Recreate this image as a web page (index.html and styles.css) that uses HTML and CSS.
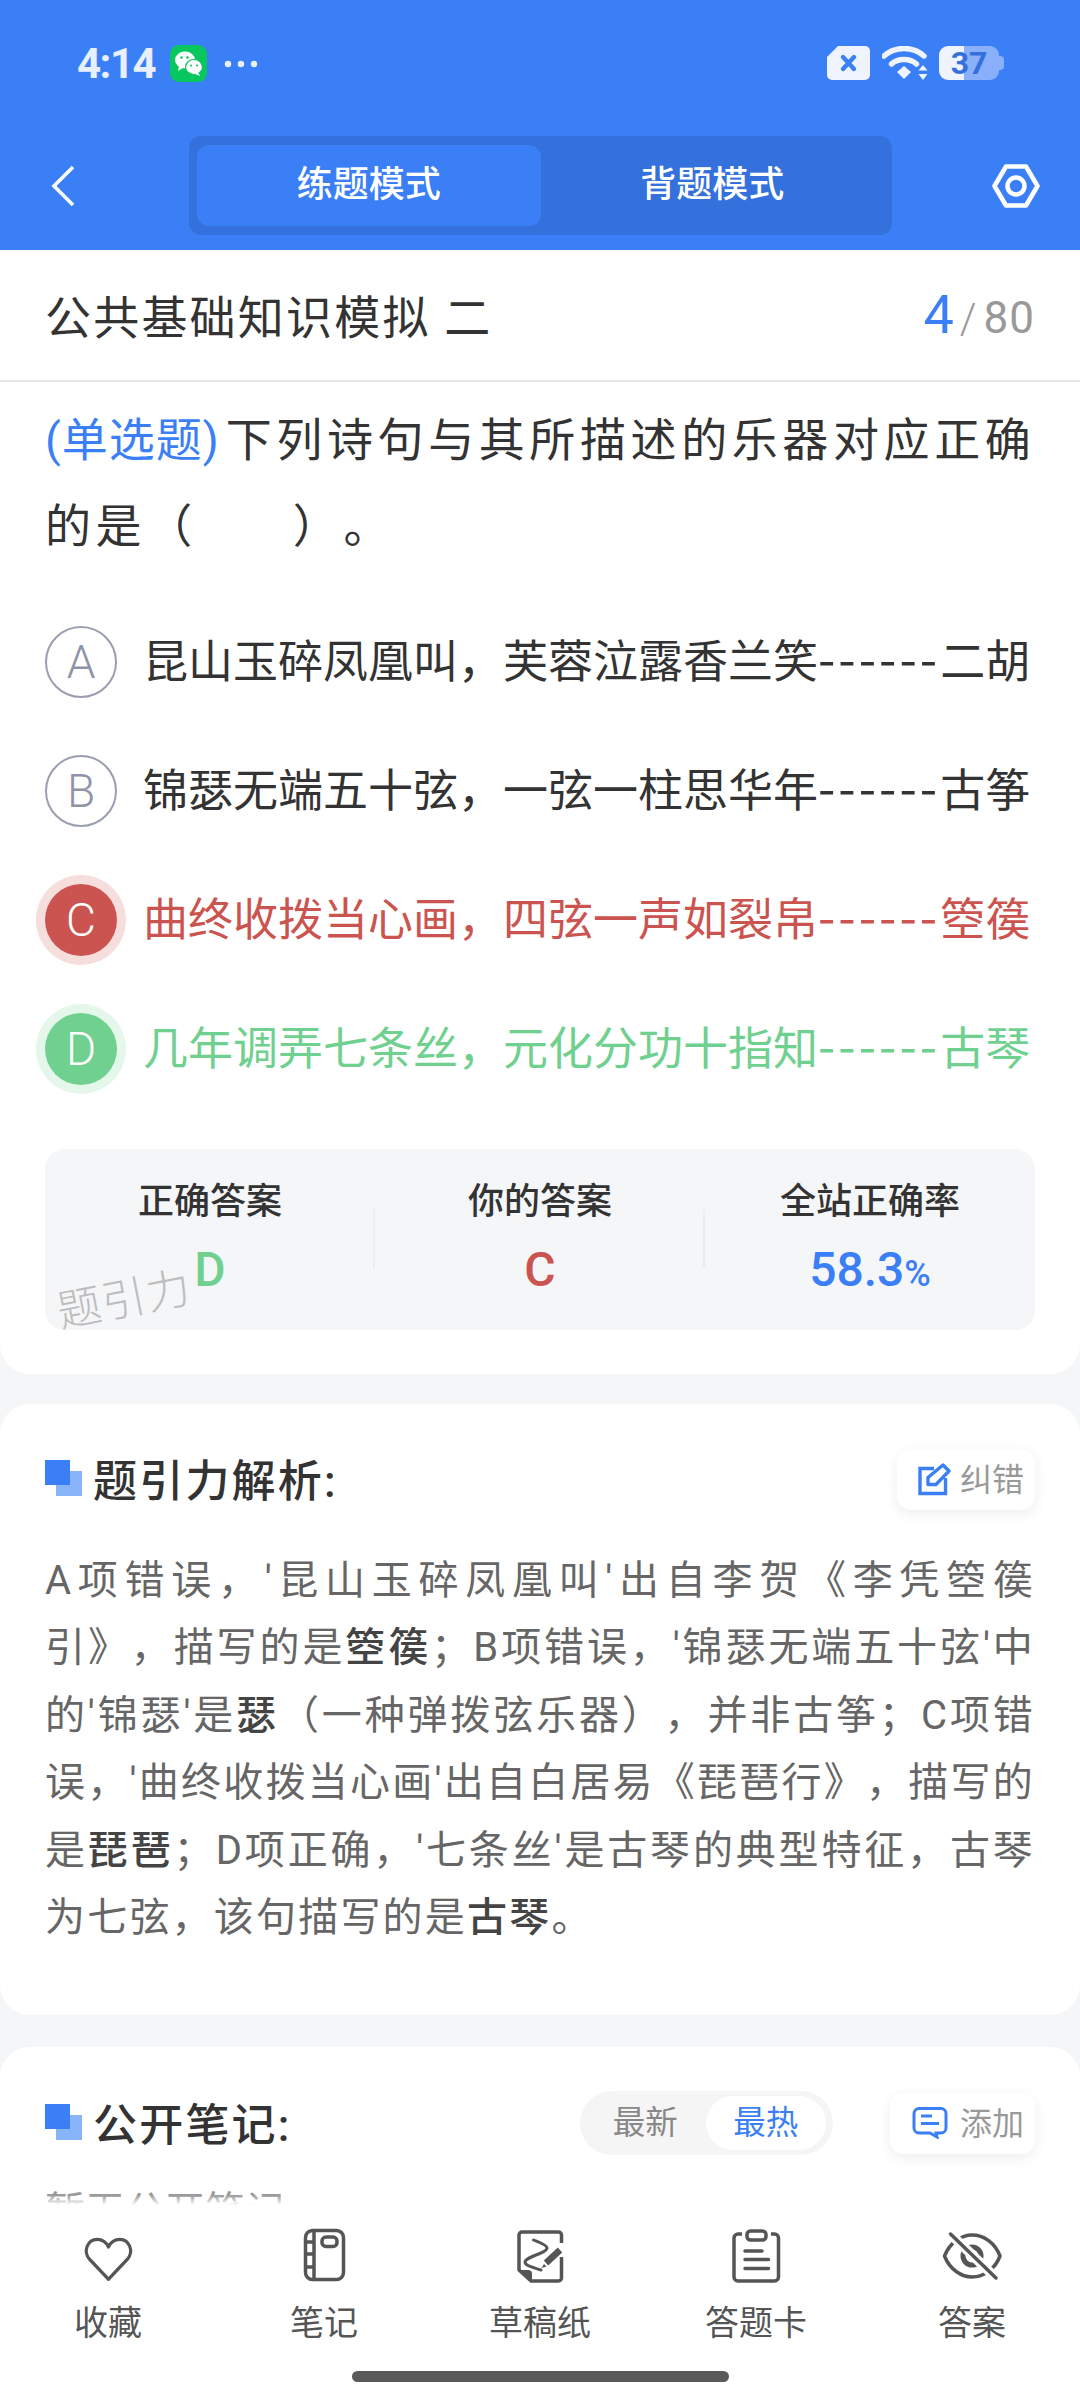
FILE: index.html
```html
<!DOCTYPE html>
<html lang="zh-CN">
<head>
    <meta charset="UTF-8">
    <meta name="viewport" content="width=device-width, initial-scale=1.0">
    <title>公共基础知识模拟 二</title>
    <link rel="stylesheet" href="styles.css">
</head>
<body>
    <div class="page">
        <header class="top">
            <div class="status-bar">
                <div class="status-left">
                    <span class="time">4:14</span>
                    <svg class="wechat" viewBox="0 0 37 37">
                        <rect width="37" height="37" rx="9" fill="#08c75f"/>
                        <ellipse cx="15" cy="15" rx="10" ry="8.5" fill="#fff"/>
                        <path d="M9 21l-1 5 5-3z" fill="#fff"/>
                        <ellipse cx="24" cy="22" rx="8.5" ry="7.5" fill="#fff" stroke="#08c75f" stroke-width="1.2"/>
                        <path d="M28 27l2 4-5-2z" fill="#fff"/>
                        <circle cx="11.5" cy="12.5" r="1.3" fill="#08c75f"/>
                        <circle cx="17.5" cy="12.5" r="1.3" fill="#08c75f"/>
                        <circle cx="21" cy="20.5" r="1.1" fill="#08c75f"/>
                        <circle cx="27" cy="20.5" r="1.1" fill="#08c75f"/>
                    </svg>
                    <svg class="dots" viewBox="0 0 34 8">
                        <circle cx="4" cy="4" r="3.2" fill="#e8effe"/>
                        <circle cx="17" cy="4" r="3.2" fill="#e8effe"/>
                        <circle cx="30" cy="4" r="3.2" fill="#e8effe"/>
                    </svg>
                </div>
                <div class="status-right">
                    <svg class="sim" viewBox="0 0 43 34">
                        <path d="M11 0H38a5 5 0 0 1 5 5V29a5 5 0 0 1-5 5H5a5 5 0 0 1-5-5V11z" fill="#eef3fe"/>
                        <path d="M16 11l11 12M27 11L16 23" stroke="#3b7ff6" stroke-width="4.4" stroke-linecap="round"/>
                    </svg>
                    <svg class="wifi" viewBox="0 0 46 34">
                        <path d="M2 10C13 0 31 0 42 10" fill="none" stroke="#eef3fe" stroke-width="5.5" stroke-linecap="round"/>
                        <path d="M9.500 18C16 12 28 12 34.500 18" fill="none" stroke="#eef3fe" stroke-width="5.5" stroke-linecap="round"/>
                        <path d="M15 26l7-6 7 6-7 7z" fill="#eef3fe"/>
                        <path d="M41 19l4.500 5.500h-9zM41 34l4.500-6h-9z" fill="#eef3fe"/>
                    </svg>
                    <div class="battery">37</div>
                </div>
            </div>
            <nav class="nav">
                <svg class="back" viewBox="0 0 24 42">
                    <path d="M22 2L3 21l19 19" fill="none" stroke="#fff" stroke-width="3.6"/>
                </svg>
                <div class="mode-tabs">
                    <div class="mode-tab active">练题模式</div>
                    <div class="mode-tab">背题模式</div>
                </div>
                <svg class="setting" viewBox="0 0 48 44">
                    <path d="M14 2.500H34L45.500 22 34 41.500H14L2.500 22z" fill="none" stroke="#fff" stroke-width="4.5" stroke-linejoin="round"/>
                    <circle cx="24" cy="22" r="8.500" fill="none" stroke="#fff" stroke-width="4.5"/>
                </svg>
            </nav>
        </header>

        <main class="scroll">
            <section class="card question-card">
                <div class="paper-row">
                    <div class="paper-title">公共基础知识模拟 二</div>
                    <div class="paper-count"><span class="current">4</span><span class="slash">/</span><span class="total">80</span></div>
                </div>
                <div class="question"><span class="qtype">(单选题)</span>下列诗句与其所描述的乐器对应正确的是（&nbsp;&nbsp;&nbsp;&nbsp;&nbsp;&nbsp;）。</div>
                <div class="options">
                    <div class="option">
                        <span class="letter">A</span>
                        <span class="option-text">昆山玉碎凤凰叫，芙蓉泣露香兰笑<span class="dash">------</span>二胡</span>
                    </div>
                    <div class="option">
                        <span class="letter">B</span>
                        <span class="option-text">锦瑟无端五十弦，一弦一柱思华年<span class="dash">------</span>古筝</span>
                    </div>
                    <div class="option wrong">
                        <span class="letter">C</span>
                        <span class="option-text">曲终收拨当心画，四弦一声如裂帛<span class="dash">------</span>箜篌</span>
                    </div>
                    <div class="option right">
                        <span class="letter">D</span>
                        <span class="option-text">几年调弄七条丝，元化分功十指知<span class="dash">------</span>古琴</span>
                    </div>
                </div>
                <div class="stats">
                    <div class="stat">
                        <div class="stat-label">正确答案</div>
                        <div class="stat-value green">D</div>
                    </div>
                    <div class="stat">
                        <div class="stat-label">你的答案</div>
                        <div class="stat-value red">C</div>
                    </div>
                    <div class="stat">
                        <div class="stat-label">全站正确率</div>
                        <div class="stat-value blue">58.3<small>%</small></div>
                    </div>
                    <div class="watermark">题引力</div>
                </div>
            </section>

            <section class="card analysis-card">
                <div class="card-head">
                    <h2 class="card-title"><i class="mark"></i>题引力解析:</h2>
                    <div class="mini-btn">
                        <svg viewBox="0 0 34 33" width="34" height="33">
                            <path d="M16 5.500H2V30.500H27.500V15" fill="none" stroke="#3b7ff6" stroke-width="3.4"/>
                            <path d="M10 21.500V14.500L25 2l6 6L18 21.500z" fill="none" stroke="#3b7ff6" stroke-width="3.4" stroke-linejoin="round"/>
                        </svg>
                        <span>纠错</span>
                    </div>
                </div>
                <p class="analysis">
                    <span class="line">A项错误，'昆山玉碎凤凰叫'出自李贺《李凭箜篌</span>
                    <span class="line">引》，描写的是<b>箜篌</b>；B项错误，'锦瑟无端五十弦'中</span>
                    <span class="line">的'锦瑟'是<b>瑟</b>（一种弹拨弦乐器），并非古筝；C项错</span>
                    <span class="line">误，'曲终收拨当心画'出自白居易《琵琶行》，描写的</span>
                    <span class="line">是<b>琵琶</b>；D项正确，'七条丝'是古琴的典型特征，古琴</span>
                    <span class="line last">为七弦，该句描写的是<b>古琴</b>。</span>
                </p>
            </section>

            <section class="card notes-card">
                <div class="card-head">
                    <h2 class="card-title"><i class="mark"></i>公开笔记:</h2>
                    <div class="notes-tools">
                        <div class="sort">
                            <span>最新</span>
                            <span class="on">最热</span>
                        </div>
                        <div class="mini-btn add">
                            <svg viewBox="0 0 36 32" width="36" height="32">
                                <path d="M7 1.500H29a5 5 0 0 1 5 5V21a5 5 0 0 1-5 5H26l-2 0 1 4-7-4H7a5 5 0 0 1-5-5V6.500a5 5 0 0 1 5-5z" fill="none" stroke="#3b7ff6" stroke-width="3"/>
                                <path d="M9 9H20M9 16.500H27" stroke="#3b7ff6" stroke-width="3"/>
                            </svg>
                            <span>添加</span>
                        </div>
                    </div>
                </div>
                <div class="empty">暂无公开笔记</div>
            </section>
        </main>

        <footer class="tabbar">
            <div class="tabs">
                <div class="tab">
                    <svg viewBox="0 0 64 64"><path class="ln" d="M32.500 55L11.500 34C4 26 9 13 20 13C26 13 30 16 32.500 21C35 16 39 13 45 13C56 13 61 26 53.500 34Z" transform="translate(3.200 3) scale(.9 .95)"/></svg>
                    <span>收藏</span>
                </div>
                <div class="tab">
                    <svg viewBox="0 0 64 64">
                        <rect class="ln" x="13.500" y="6.500" width="38" height="49" rx="7"/>
                        <path class="ln" d="M22 7V55M14 18H22M14 30H22M14 43H22"/>
                        <rect class="ln" x="30" y="13" width="15" height="9.500" rx="4"/>
                    </svg>
                    <span>笔记</span>
                </div>
                <div class="tab">
                    <svg viewBox="0 0 64 64">
                        <path class="ln" d="M53.500 19V11a3 3 0 0 0-3-3H14a3 3 0 0 0-3 3V46l12 11H50.500a3 3 0 0 0 3-3V33"/>
                        <path d="M11 46H20a4 4 0 0 1 4 4V57z" fill="#555"/>
                        <path d="M25.500 16C30 18 39 21 39 24C39 29 17 33 17 38C17 42 27 44 33 46" fill="none" stroke="#555" stroke-width="3" stroke-linecap="round"/>
                        <path d="M38 39L52 26" stroke="#555" stroke-width="6.500"/>
                        <path d="M33.500 44L36 40 38.500 42.500z" fill="#555"/>
                    </svg>
                    <span>草稿纸</span>
                </div>
                <div class="tab">
                    <svg viewBox="0 0 64 64">
                        <path class="ln" d="M18 10H14a4 4 0 0 0-4 4V53a4 4 0 0 0 4 4H50.500a4 4 0 0 0 4-4V14a4 4 0 0 0-4-4H47"/>
                        <rect class="ln" x="23" y="7" width="19" height="9" rx="3.500"/>
                        <path class="ln round" d="M21 27H38M21 35.500H44.500M21 44.500H44.500"/>
                    </svg>
                    <span>答题卡</span>
                </div>
                <div class="tab">
                    <svg viewBox="0 0 64 64">
                        <path class="ln" d="M4.500 32C10 18 22 11 32 11C44 11 55 19 60 32C55 45 44 53 32 53C22 53 10 46 4.500 32Z"/>
                        <circle cx="32" cy="32" r="9" fill="none" stroke="#555" stroke-width="5"/>
                        <path d="M10.500 10L56 54" stroke="#fff" stroke-width="10"/>
                        <path class="ln round" d="M10.500 10L56 54"/>
                    </svg>
                    <span>答案</span>
                </div>
            </div>
            <div class="home-bar"></div>
        </footer>
    </div>
</body>
</html>
```
FILE: styles.css
```css
* {
    box-sizing: border-box;
}
body {
    margin: 0;
    font-family: Roboto, "Noto Sans CJK SC", sans-serif;
    color: #333;
    background-color: #f5f6f8;
    text-spacing-trim: space-all;
}
.page {
    width: 1080px;
    height: 2400px;
    display: flex;
    flex-direction: column;
    overflow: hidden;
}

/* Top blue area */
.top {
    height: 250px;
    flex-shrink: 0;
    background-color: #3b7ff6;
}
.status-bar {
    height: 136px;
    padding: 45px 81px 0 77px;
    display: flex;
    justify-content: space-between;
    align-items: flex-start;
}
.status-left {
    display: flex;
    align-items: center;
    height: 37px;
}
.time {
    width: 93px;
    font-size: 42px;
    font-weight: 700;
    letter-spacing: -1.5px;
    color: #e8effe;
}
.wechat {
    width: 37px;
    height: 37px;
}
.dots {
    width: 34px;
    height: 8px;
    margin-left: 17px;
}
.status-right {
    display: flex;
    align-items: center;
    height: 34px;
    margin-top: 1px;
}
.sim {
    width: 43px;
    height: 34px;
}
.wifi {
    width: 46px;
    height: 34px;
    margin-left: 12px;
}
.battery {
    position: relative;
    width: 60px;
    height: 34px;
    margin-left: 11px;
    border-radius: 9px;
    background: linear-gradient(90deg, #eef3fe 42%, #8ab0fb 42%);
    color: #3571dd;
    font-size: 32px;
    font-weight: 700;
    line-height: 34px;
    text-align: center;
}
.battery::after {
    content: "";
    position: absolute;
    right: -5px;
    top: 10px;
    width: 5px;
    height: 14px;
    border-radius: 0 4px 4px 0;
    background-color: #8ab0fb;
}
.nav {
    display: flex;
    align-items: center;
    height: 99px;
    padding-left: 51px;
}
.back {
    width: 24px;
    height: 42px;
}
.mode-tabs {
    display: flex;
    width: 703px;
    height: 99px;
    margin-left: 114px;
    padding: 9px 8px;
    border-radius: 12px;
    background-color: #3571dd;
}
.mode-tab {
    flex: 1;
    border-radius: 12px;
    color: #fff;
    font-size: 36px;
    font-weight: 500;
    line-height: 81px;
    text-align: center;
}
.mode-tab.active {
    background-color: #3b7ff6;
}
.setting {
    width: 48px;
    height: 44px;
    margin-left: 100px;
}

/* Cards */
.scroll {
    flex: 1;
    overflow: hidden;
}
.card {
    padding: 0 45px;
    background-color: #fff;
    border-radius: 30px;
}
.question-card {
    height: 1124px;
    border-radius: 0 0 30px 30px;
}
.paper-row {
    display: flex;
    justify-content: space-between;
    align-items: center;
    height: 132px;
    margin: 0 -45px;
    padding: 0 45px 2px;
    border-bottom: 2px solid #e6e6e6;
}
.paper-title {
    font-size: 46px;
    letter-spacing: 2.2px;
}
.paper-count {
    display: flex;
    align-items: baseline;
    color: #999;
}
.current {
    font-size: 54px;
    color: #3b7ff6;
}
.slash {
    margin: 0 7px 0 6px;
    font-size: 42px;
    font-weight: 300;
}
.total {
    font-size: 44px;
    letter-spacing: 1px;
}
.question {
    margin: 15px -10px 0 0;
    font-size: 46px;
    line-height: 86px;
    letter-spacing: 4.6px;
}
.qtype {
    margin-right: 6px;
    color: #3b7ff6;
    letter-spacing: 1px;
}
.options {
    display: flex;
    flex-direction: column;
    gap: 57px;
    margin-top: 57px;
}
.option {
    display: flex;
    align-items: center;
    gap: 26px;
    height: 72px;
}
.letter {
    width: 72px;
    height: 72px;
    flex-shrink: 0;
    border: 2px solid #9a9fb0;
    border-radius: 50%;
    color: #8f94a8;
    font-size: 46px;
    font-weight: 300;
    line-height: 68px;
    text-align: center;
}
.option-text {
    font-size: 45px;
    line-height: 60px;
    white-space: nowrap;
}
.dash {
    font-family: "Noto Sans CJK SC", sans-serif;
    font-size: 50px;
    line-height: 1;
    letter-spacing: 3px;
}
.wrong .letter {
    border: 0;
    background-color: #cb5450;
    box-shadow: 0 0 0 9px #f6dedd;
    color: #fff;
    line-height: 72px;
}
.wrong .option-text {
    color: #cb5450;
}
.right .letter {
    border: 0;
    background-color: #70d08f;
    box-shadow: 0 0 0 9px #e5f7eb;
    color: #fff;
    line-height: 72px;
}
.right .option-text {
    color: #70d08f;
}
.stats {
    position: relative;
    display: grid;
    grid-template-columns: repeat(3, 1fr);
    height: 181px;
    margin-top: 64px;
    padding-top: 28px;
    border-radius: 20px;
    background-color: #f5f6f8;
}
.stat {
    position: relative;
    text-align: center;
}
.stat + .stat::before {
    content: "";
    position: absolute;
    left: -2px;
    top: 32px;
    width: 2px;
    height: 59px;
    background-color: #ecedf0;
}
.stat-label {
    font-size: 36px;
    font-weight: 500;
    line-height: 50px;
}
.stat-value {
    margin-top: 18px;
    font-size: 48px;
    font-weight: 500;
    line-height: 50px;
}
.stat-value small {
    font-size: 36px;
}
.green { color: #70d08f; }
.red { color: #cb5450; }
.blue { color: #3b7ff6; }
.watermark {
    position: absolute;
    left: 11px;
    top: 115px;
    color: #bdbdbd;
    font-size: 44px;
    font-weight: 300;
    letter-spacing: 1px;
    transform: rotate(-11deg);
}

.analysis-card {
    height: 611px;
    margin-top: 30px;
    padding-top: 44px;
}
.notes-card {
    height: 400px;
    margin-top: 32px;
    padding-top: 45px;
}
.card-head {
    display: flex;
    justify-content: space-between;
    align-items: center;
    height: 62px;
}
.card-title {
    display: flex;
    align-items: center;
    margin: 0;
    padding-bottom: 2px;
    font-size: 44px;
    font-weight: 500;
    letter-spacing: 2.2px;
}
.mark {
    position: relative;
    width: 37px;
    height: 36px;
    margin-right: 11px;
}
.mark::before {
    content: "";
    position: absolute;
    right: 0;
    bottom: 0;
    width: 26px;
    height: 25px;
    background-color: #8ab4fa;
}
.mark::after {
    content: "";
    position: absolute;
    left: 0;
    top: 0;
    width: 25px;
    height: 25px;
    background-color: #3b7ff6;
}
.mini-btn {
    display: flex;
    align-items: center;
    gap: 8px;
    width: 138px;
    height: 61px;
    padding-left: 21px;
    border-radius: 14px;
    background-color: #fff;
    box-shadow: 0 4px 14px rgba(0, 0, 0, 0.07);
    color: #999;
    font-size: 32px;
}
.mini-btn span {
    margin-bottom: 4px;
}
.mini-btn.add {
    width: 145px;
    padding-left: 22px;
    gap: 12px;
}
.notes-tools {
    display: flex;
    align-items: center;
    gap: 57px;
}
.sort {
    display: flex;
    align-items: center;
    width: 253px;
    height: 64px;
    padding: 0 7px 0 5px;
    border-radius: 32px;
    background-color: #f5f5f5;
    color: #888;
    font-size: 32.5px;
}
.sort span {
    flex: 1;
    height: 54px;
    line-height: 54px;
    text-align: center;
    border-radius: 27px;
}
.sort .on {
    background-color: #fff;
    color: #3b7ff6;
}
.analysis {
    margin: 37px 0 0;
    color: #666;
    font-size: 40px;
    line-height: 67.4px;
    letter-spacing: 2.2px;
}
.line {
    display: block;
    white-space: nowrap;
    text-align: justify;
    text-align-last: justify;
}
.line.last {
    text-align-last: left;
}
.analysis b {
    color: #444;
    font-weight: 500;
}
.empty {
    margin-top: 28px;
    color: #999;
    font-size: 40px;
    line-height: 60px;
}

/* Bottom bar */
.tabbar {
    position: relative;
    height: 195px;
    flex-shrink: 0;
    padding-top: 19px;
    background-color: #fff;
}
.tabbar::before {
    content: "";
    position: absolute;
    left: 0;
    right: 0;
    top: -10px;
    height: 10px;
    background: linear-gradient(rgba(255, 255, 255, 0), #fff);
}
.tabs {
    display: grid;
    grid-template-columns: repeat(5, 1fr);
}
.tab {
    display: flex;
    flex-direction: column;
    align-items: center;
    color: #555;
    font-size: 34px;
    line-height: 46px;
}
.tab svg {
    width: 64px;
    height: 64px;
    margin-bottom: 12px;
}
.ln {
    fill: none;
    stroke: #555;
    stroke-width: 3.5;
    stroke-linejoin: round;
}
.ln.round {
    stroke-linecap: round;
}
.home-bar {
    width: 377px;
    height: 11px;
    margin: 25px auto 0;
    border-radius: 6px;
    background-color: #5a5a5a;
}
```
